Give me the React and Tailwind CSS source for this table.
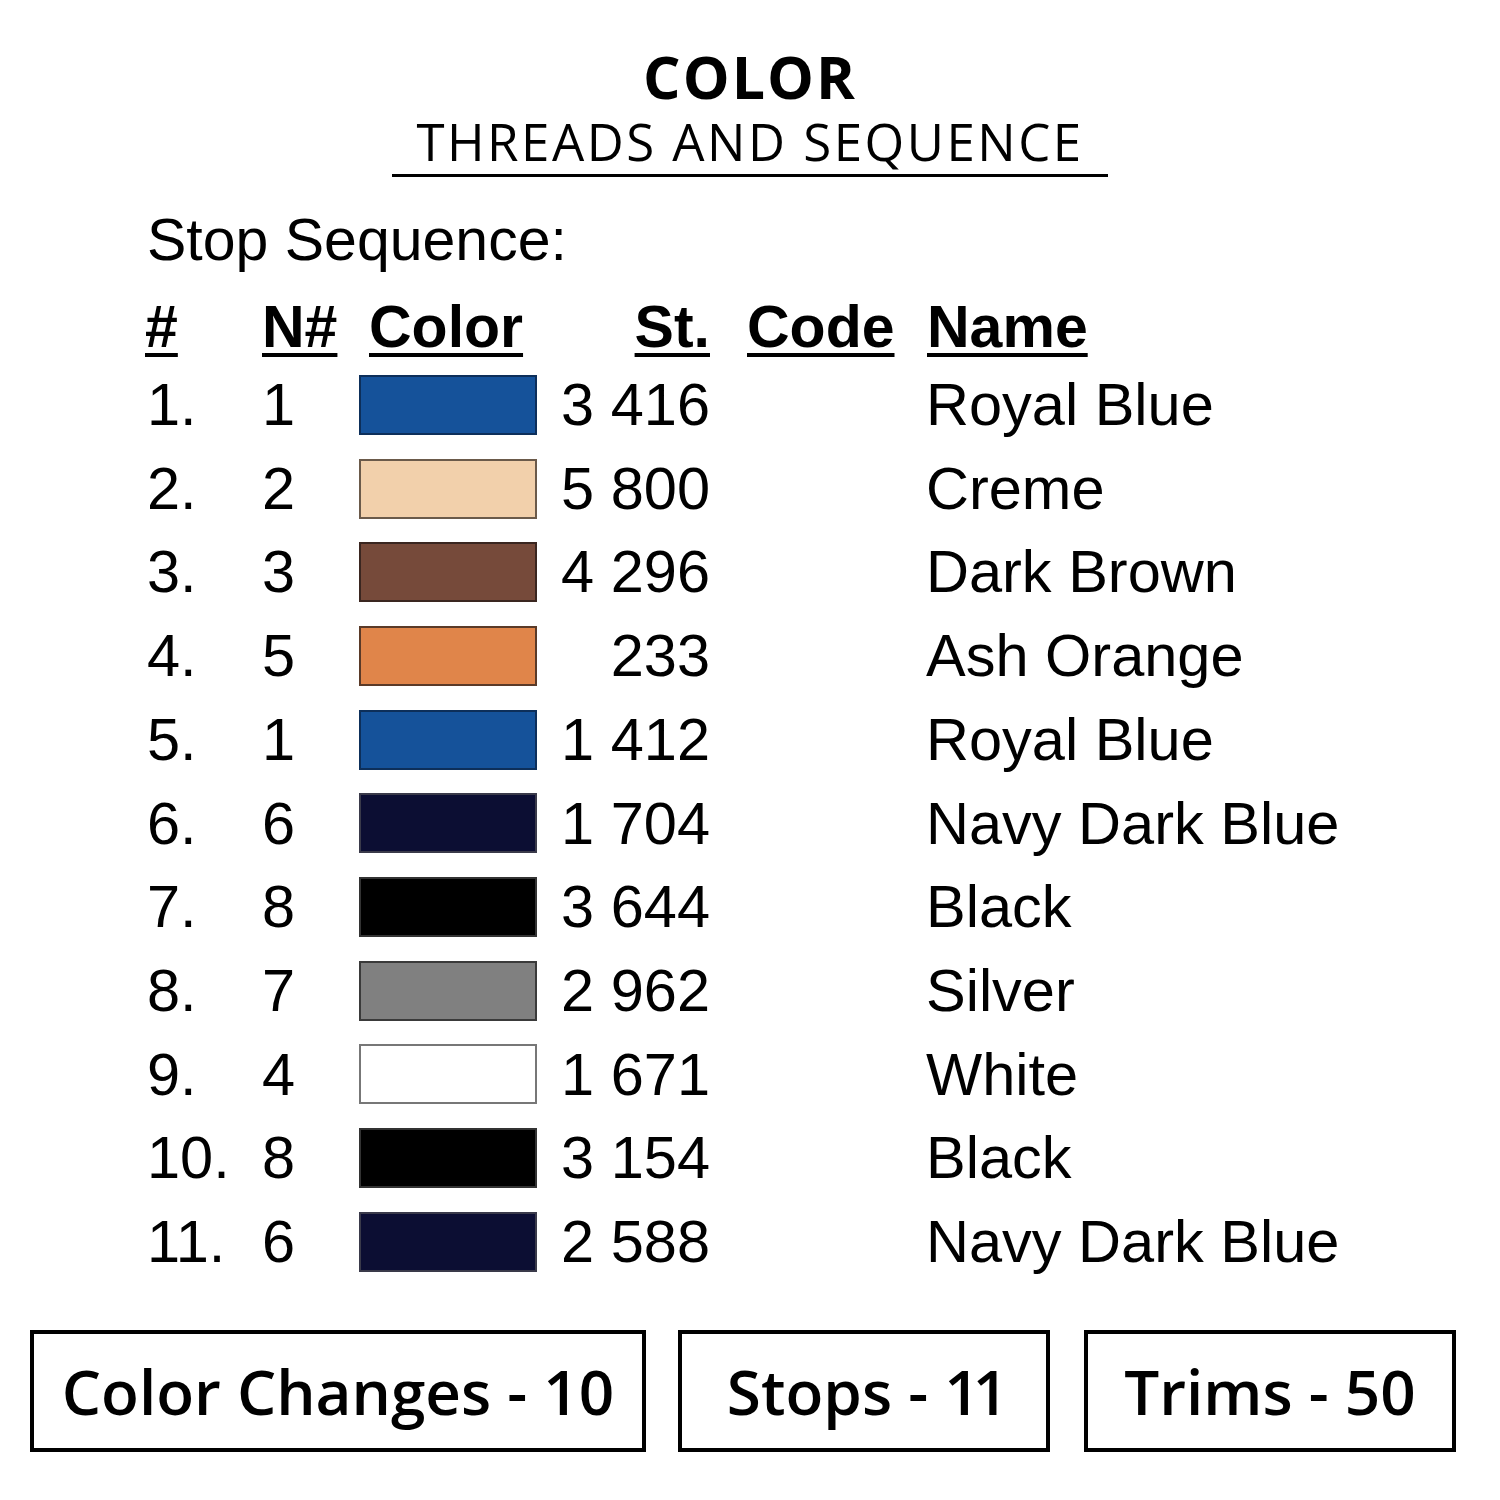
import React from 'react';

const rows = [
  { n: '1.', needle: '1', color: '#15529a', edge: '#0d2f5a', st: '3 416', name: 'Royal Blue' },
  { n: '2.', needle: '2', color: '#f2d0ab', edge: '#6b5a4a', st: '5 800', name: 'Creme' },
  { n: '3.', needle: '3', color: '#764a3a', edge: '#3a2620', st: '4 296', name: 'Dark Brown' },
  { n: '4.', needle: '5', color: '#e0854a', edge: '#5a3a28', st: '233', name: 'Ash Orange' },
  { n: '5.', needle: '1', color: '#15529a', edge: '#0d2f5a', st: '1 412', name: 'Royal Blue' },
  { n: '6.', needle: '6', color: '#0c0e33', edge: '#3a3a4a', st: '1 704', name: 'Navy Dark Blue' },
  { n: '7.', needle: '8', color: '#000000', edge: '#333333', st: '3 644', name: 'Black' },
  { n: '8.', needle: '7', color: '#808080', edge: '#3a3a3a', st: '2 962', name: 'Silver' },
  { n: '9.', needle: '4', color: '#ffffff', edge: '#777777', st: '1 671', name: 'White' },
  { n: '10.', needle: '8', color: '#000000', edge: '#333333', st: '3 154', name: 'Black' },
  { n: '11.', needle: '6', color: '#0c0e33', edge: '#3a3a4a', st: '2 588', name: 'Navy Dark Blue' },
];

const Box = ({ children, className }) => (
  <div className={`h-[122px] border-[4px] border-black flex items-center justify-center ${className}`}>
    <span className="font-['Open_Sans',sans-serif] font-semibold text-[62px] leading-none">
      {children}
    </span>
  </div>
);

export default function App() {
  return (
    <div className="w-[1500px] h-[1500px] bg-white text-black overflow-hidden">
      {/* Title */}
      <div className="flex flex-col items-center pt-[48px] font-['Open_Sans',sans-serif]">
        <div className="h-[56px] leading-[56px] text-[59px] font-bold tracking-[2px]">COLOR</div>
        <div className="h-[52px] leading-[52px] text-[51px] tracking-[2.5px] mt-[11px]">THREADS AND SEQUENCE</div>
        <div className="w-[716px] h-[3px] bg-black mt-[7px]" />
      </div>

      {/* Stop sequence table */}
      <div className="pl-[147px] font-['Liberation_Sans',Arial,sans-serif]">
        <div className="h-[60px] leading-[60px] text-[59px] mt-[33px]">Stop Sequence:</div>

        <div className="flex items-center h-[70px] mt-[22px] text-[59px] font-bold leading-none">
          <span className="w-[115px] -ml-[2px] underline decoration-[4px] underline-offset-[6px]">#</span>
          <span className="w-[107px] ml-[2px] underline decoration-[4px] underline-offset-[6px]">N#</span>
          <span className="w-[155px] underline decoration-[4px] underline-offset-[6px]">Color</span>
          <span className="w-[186px] text-right underline decoration-[4px] underline-offset-[6px]">St.</span>
          <span className="ml-[37px] w-[180px] underline decoration-[4px] underline-offset-[6px]">Code</span>
          <span className="underline decoration-[4px] underline-offset-[6px]">Name</span>
        </div>

        <div className="mt-[1px]">
          {rows.map((r, i) => (
            <div key={i} className="flex items-center h-[83.7px] text-[59.5px] leading-none">
              <span className="w-[115px]">{r.n}</span>
              <span className="w-[97px]">{r.needle}</span>
              <span
                className="w-[178px] h-[60px] border-2"
                style={{ backgroundColor: r.color, borderColor: r.edge }}
              />
              <span className="w-[173px] text-right">{r.st}</span>
              <span className="w-[216px]" />
              <span>{r.name}</span>
            </div>
          ))}
        </div>
      </div>

      {/* Summary boxes */}
      <div className="flex pl-[30px] mt-[46px]">
        <Box className="w-[616px]">Color Changes - 10</Box>
        <Box className="w-[372px] ml-[32px]">
          Stops - <span className="tracking-[-7px]">11</span>
        </Box>
        <Box className="w-[372px] ml-[34px]">Trims - 50</Box>
      </div>
    </div>
  );
}
